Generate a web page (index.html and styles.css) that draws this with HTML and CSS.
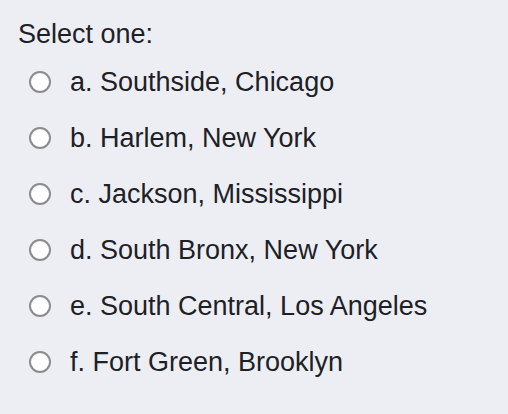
FILE: index.html
```html
<!DOCTYPE html>
<html>
<head>
<meta charset="utf-8">
<link rel="stylesheet" href="styles.css">
</head>
<body>
<div class="question">
  <div class="prompt">Select one:</div>
  <div class="answers">
    <label class="option"><span class="radio"></span><span class="label">a. Southside, Chicago</span></label>
    <label class="option"><span class="radio"></span><span class="label">b. Harlem, New York</span></label>
    <label class="option"><span class="radio"></span><span class="label">c. Jackson, Mississippi</span></label>
    <label class="option"><span class="radio"></span><span class="label">d. South Bronx, New York</span></label>
    <label class="option"><span class="radio"></span><span class="label">e. South Central, Los Angeles</span></label>
    <label class="option"><span class="radio"></span><span class="label">f. Fort Green, Brooklyn</span></label>
  </div>
</div>
</body>
</html>
```
FILE: styles.css
```css
html, body {
  margin: 0;
  padding: 0;
  background: #edeef4;
}
body {
  width: 508px;
  height: 414px;
  overflow: hidden;
  font-family: "Liberation Sans", Arial, sans-serif;
  font-size: 27px;
  color: #1d2125;
}
.question {
  padding: 14px 0 0 18px;
}
.prompt {
  height: 40px;
  line-height: 40px;
}
.answers {
  display: flex;
  flex-direction: column;
}
.option {
  display: flex;
  align-items: center;
  height: 56px;
  padding-left: 11px;
  gap: 19px;
}
.radio {
  box-sizing: border-box;
  width: 22px;
  height: 22px;
  border: 2px solid #8c8c8c;
  border-radius: 50%;
  background: #ffffff;
  flex: none;
}
.label {
  line-height: 32px;
}
```
